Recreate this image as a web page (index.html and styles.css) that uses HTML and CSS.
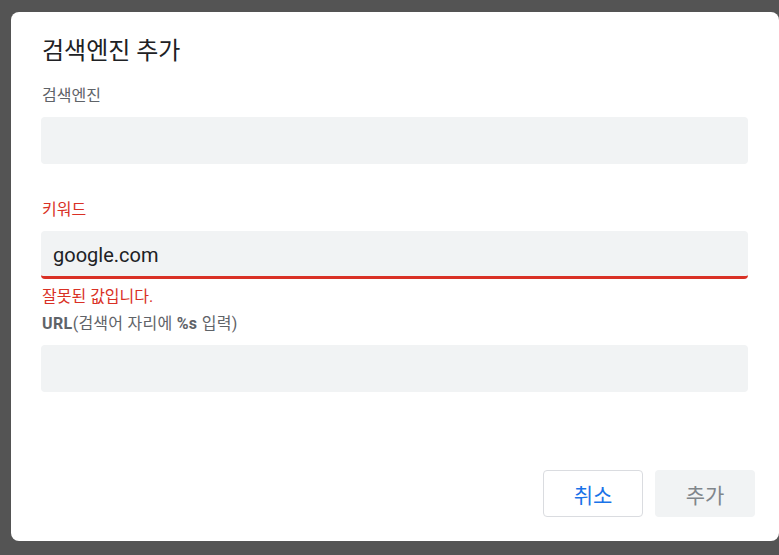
FILE: index.html
```html
<!DOCTYPE html>
<html lang="ko">
<head>
<meta charset="utf-8">
<link rel="stylesheet" href="styles.css">
</head>
<body>
<div class="dialog">
  <h1 class="title">검색엔진 추가</h1>
  <div class="field">
    <label class="label">검색엔진</label>
    <div class="input"></div>
  </div>
  <div class="field field-gap">
    <label class="label label-error">키워드</label>
    <div class="input input-error"><span class="value">google.com</span></div>
    <div class="error">잘못된 값입니다.</div>
  </div>
  <div class="field field-url">
    <label class="label label-url"><b>URL</b>(검색어 자리에 <b>%s</b> 입력)</label>
    <div class="input"></div>
  </div>
  <div class="footer">
    <button class="btn btn-cancel">취소</button>
    <button class="btn btn-add">추가</button>
  </div>
</div>
</body>
</html>
```

FILE: styles.css
```css
html, body {
  margin: 0;
  height: 100%;
}
body {
  background: #545454;
  padding: 12px 0 14px 11px;
  box-sizing: border-box;
  font-family: Roboto, "Noto Sans CJK KR", sans-serif;
}
.dialog {
  width: 768px;
  height: 529px;
  background: #fff;
  border-radius: 8px;
  box-sizing: border-box;
  padding: 0 31px 24px 30px;
  display: flex;
  flex-direction: column;
}
.title {
  margin: 0;
  padding: 25px 0 21px 1px;
  font-size: 24px;
  line-height: 28px;
  font-weight: 400;
  color: #202124;
}
.field {
  display: flex;
  flex-direction: column;
}
.field-gap {
  margin-top: 36px;
}
.field-url {
  margin-top: 7px;
}
.label {
  font-size: 16px;
  line-height: 20px;
  color: #5f6368;
  margin: 0 0 11px 1px;
}
.label-url {
  letter-spacing: 0.25px;
}
.label b {
  font-weight: 700;
  letter-spacing: 0.4px;
}
.label-error {
  color: #d93025;
}
.input {
  height: 47px;
  background: #f1f3f4;
  border-radius: 4px;
  box-sizing: border-box;
  display: flex;
  align-items: center;
  padding: 0 12px;
}
.input-error {
  height: 48px;
  border-bottom: 3px solid #d93025;
  padding-top: 3px;
}
.value {
  font-size: 20px;
  color: #202124;
}
.error {
  margin: 8px 0 0 1px;
  font-size: 16px;
  line-height: 20px;
  color: #d93025;
}
.footer {
  margin-top: auto;
  margin-right: -7px;
  display: flex;
  justify-content: flex-end;
  gap: 12px;
}
.btn {
  width: 100px;
  height: 47px;
  border-radius: 4px;
  font-family: Roboto, "Noto Sans CJK KR", sans-serif;
  font-size: 21px;
  box-sizing: border-box;
  padding: 0;
}
.btn-cancel {
  background: #fff;
  border: 1px solid #dadce0;
  color: #1a73e8;
}
.btn-add {
  background: #f1f3f4;
  border: none;
  color: #80868b;
}
```
